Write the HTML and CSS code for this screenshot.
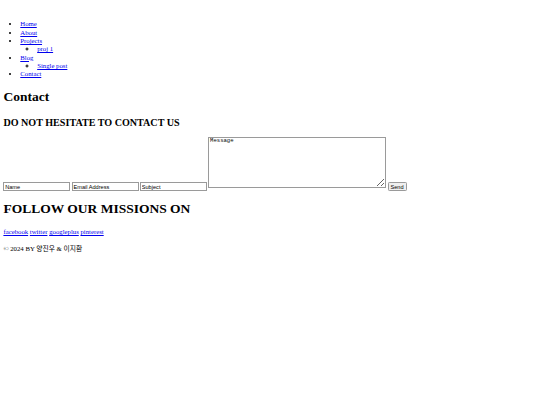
FILE: index.html
```html
<!DOCTYPE html>
<html lang="ko">
<head>
<meta charset="utf-8">
<title>Contact</title>
<link rel="stylesheet" href="styles.css">
</head>
<body>
<header class="site-header">
  <nav class="main-nav">
    <ul class="menu">
      <li><a href="#">Home</a></li>
      <li><a href="#">About</a></li>
      <li><a href="#">Projects</a>
        <ul class="submenu">
          <li><a href="#">proj 1</a></li>
        </ul>
      </li>
      <li><a href="#">Blog</a>
        <ul class="submenu">
          <li><a href="#">Single post</a></li>
        </ul>
      </li>
      <li><a href="#">Contact</a></li>
    </ul>
  </nav>
</header>
<main class="contact">
  <h1 class="page-title">Contact</h1>
  <h2 class="section-title">DO NOT HESITATE TO CONTACT US</h2>
  <form class="contact-form">
    <input type="text" class="field" value="Name">
    <input type="text" class="field" value="Email Address">
    <input type="text" class="field" value="Subject">
    <textarea class="message">Message</textarea>
    <button type="button" class="send">Send</button>
  </form>
  <h1 class="page-title follow-title">FOLLOW OUR MISSIONS ON</h1>
  <p class="social">
    <a href="#">facebook</a>
    <a href="#">twitter</a>
    <a href="#">googleplus</a>
    <a href="#">pinterest</a>
  </p>
</main>
<footer class="site-footer">
  <p class="copyright">© 2024 BY 양진우 &amp; 이지환</p>
</footer>
</body>
</html>
```

FILE: styles.css
```css
body {
  margin: 3.4px;
  font-family: "Liberation Serif", "Noto Sans CJK KR", serif;
  font-size: 6.75px;
  line-height: 8.33px;
  color: #000;
  background: #fff;
}
a {
  color: #0000ee;
}
.site-header {
  padding-top: 10.2px;
}
.menu {
  margin: 6.75px 0;
  padding-left: 16.9px;
  list-style-type: disc;
}
.submenu {
  margin: 0;
  padding-left: 16.9px;
  list-style-type: circle;
}
.page-title {
  font-size: 13.5px;
  line-height: 20px;
  margin: 8.05px 0 9.05px;
}
.follow-title {
  margin-bottom: 9.4px;
}
.section-title {
  font-size: 10.1px;
  line-height: 13.4px;
  margin: 8.4px 0 7.4px;
}
.contact-form {
  margin: 0;
  font-size: 5.2px;
}
.field {
  box-sizing: border-box;
  width: 67px;
  height: 9px;
  margin: 0;
  padding: 0 0.8px;
  border: 1px solid #9a9a9a;
  border-radius: 0;
  font-family: "Liberation Sans", Arial, sans-serif;
  font-size: 5.6px;
  color: #000;
  background: #fff;
}
.message {
  box-sizing: border-box;
  width: 178px;
  height: 51px;
  margin: 0 0 1px;
  padding: 0.8px;
  border: 1px solid #9a9a9a;
  font-family: "Liberation Mono", "DejaVu Sans Mono", monospace;
  font-size: 5.6px;
  line-height: 6.4px;
  color: #000;
  background: #fff;
}
.send {
  box-sizing: border-box;
  width: 19px;
  height: 9px;
  margin: 0;
  padding: 0;
  border: 1px solid #9a9a9a;
  border-radius: 1.3px;
  background: #efefef;
  font-family: "Liberation Sans", Arial, sans-serif;
  font-size: 5.6px;
  color: #000;
}
.social {
  margin: 6.75px 0;
}
.copyright {
  margin: 8.4px 0;
}
```
